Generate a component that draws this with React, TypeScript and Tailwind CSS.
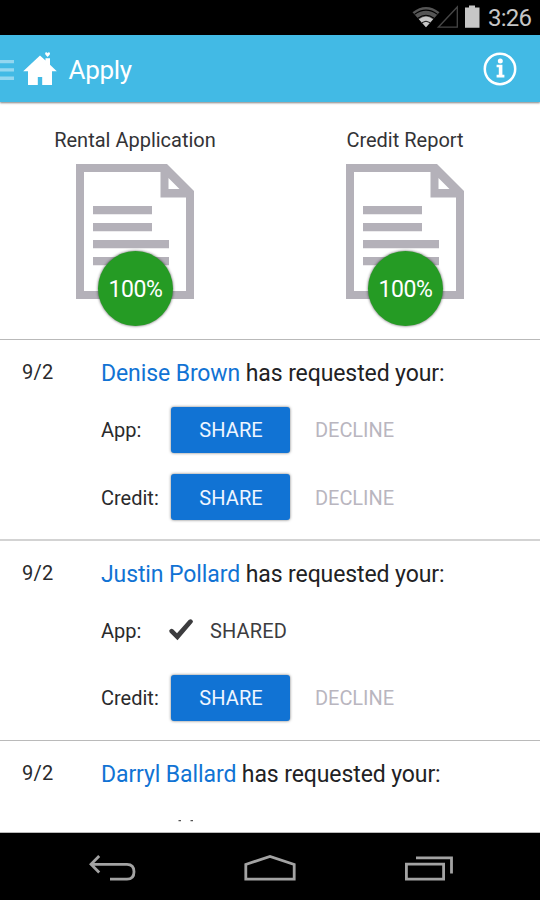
import React from "react";

function StatusBar() {
  return (
    <div className="flex h-[35px] items-center justify-end bg-black pr-[9px] text-[#c6c6c6]">
      <svg width="70" height="35" viewBox="0 0 70 35" className="block">
        <path d="M2.5 12.2Q16 1.6 29.5 12.2L16 27.2Z" fill="#555" />
        <path d="M4.5 14.4Q16 5.8 27.5 14.4M8 18.2Q16 12.2 24 18.2" fill="none" stroke="#000" strokeWidth="1.1" />
        <path d="M8.9 19.3Q16 13.8 23.1 19.3L16 27.2Z" fill="#c6c6c6" />
        <path d="M12 22.6Q16 19.8 20 22.6" fill="none" stroke="#000" strokeWidth="0.9" />
        <path d="M28.3 27.2H47.3V7Z" fill="none" stroke="#464646" strokeWidth="1.3" />
        <path d="M55 7.5H59V5.5H65V7.5H69.5V27.7H55Z" fill="#c6c6c6" />
      </svg>
      <span className="ml-[8px] w-[43px] whitespace-nowrap pt-[2px] text-[24px] leading-[33px] tracking-[-0.8px]">3:26</span>
    </div>
  );
}

function Header() {
  return (
    <header className="relative z-10 flex h-[67px] items-center bg-[#42bae5] text-white shadow-[0_1px_2px_rgba(0,0,0,0.5)]">
      <svg width="60" height="67" viewBox="0 0 60 67" className="block">
        <path d="M0 25H14V28.3H0ZM0 33.2H14V36.5H0ZM0 41.5H14V45H0Z" fill="#93d7f0" />
        <path d="M40 20.5L23.2 36.3H28V50H37.8V42H42.2V50H52V36.3H56.8L50 29.7V23.3H45.5V25.6Z" fill="#fff" />
        <path d="M47.6 22L45.5 19.8Q44.5 17.5 46.2 17.3Q47.2 17.3 47.6 18.3Q48 17.3 49 17.3Q50.7 17.5 49.7 19.8Z" fill="#fff" />
      </svg>
      <h1 className="ml-[8.5px] pt-[3px] text-[26px] font-normal leading-[64px] tracking-[-0.3px]">Apply</h1>
      <svg width="34" height="34" viewBox="0 0 34 34" className="ml-auto mr-[23px] block">
        <circle cx="17" cy="17" r="15.2" fill="none" stroke="#fff" strokeWidth="2.5" />
        <circle cx="17.3" cy="9" r="2.5" fill="#fff" />
        <path d="M13.6 12.7H19.4V22.7H21.4V25.5H13.6V22.7H15.8V15.3H13.6Z" fill="#fff" />
      </svg>
    </header>
  );
}

function Report({ title }: { title: string }) {
  return (
    <div className="flex w-[270px] flex-col items-center">
      <div className="mt-[25px] h-[37px] whitespace-nowrap text-[20px] leading-[26px] text-[#333336]">{title}</div>
      <div className="relative">
        <svg width="118" height="135" viewBox="0 0 118 135" className="block">
          <path fillRule="evenodd" d="M0 0H91L118 27V135H0ZM8 8V127H110V33.5H84.5V8ZM92.5 14V25H103.5Z" fill="#b4b1b9" />
          <path d="M17 42H76V50.2H17ZM17 59H76V67.2H17ZM17 76H93V84.2H17ZM17 93H93V101.2H17Z" fill="#b4b1b9" />
        </svg>
        <div className="absolute left-[21.5px] top-[86.5px] flex h-[75px] w-[75px] items-center justify-center rounded-full bg-[#259b24] text-[23px] tracking-[-0.4px] text-white shadow-[0_0_3px_rgba(0,0,0,0.65)]">
          <span className="pl-[1px] pt-[4px]">100%</span>
        </div>
      </div>
    </div>
  );
}

function Action({ label, shared = false }: { label: string; shared?: boolean }) {
  return (
    <div className="flex h-[46px] items-center text-[20px]">
      <span className="w-[70px] whitespace-nowrap pt-[1px] text-[#2a2a2c]">{label}</span>
      {shared ? (
        <>
          <svg width="24" height="22" viewBox="0 0 24 22" className="-ml-[2px] block">
            <path d="M0.3 11.3Q2 8.5 4.3 10.5L8 14.3L19.7 1Q22.5 -0.8 24 2.2Q23.8 3.5 22.8 4.5L8.5 21.2L1 13.7Q0.2 12.8 0.3 11.3Z" fill="#3c3c3e" />
          </svg>
          <span className="ml-[17px] pt-[1px] tracking-[0.15px] text-[#3c3c3f]">SHARED</span>
        </>
      ) : (
        <>
          <button className="h-[46px] w-[119px] rounded-[3px] bg-[#1173d4] pt-[1px] pl-px tracking-[0.1px] text-[#eef5ff] shadow-[0_0_3px_rgba(0,0,0,0.55)]">SHARE</button>
          <span className="ml-[25px] pt-[1px] tracking-[-0.05px] text-[#b9b6bf]">DECLINE</span>
        </>
      )}
    </div>
  );
}

function Request({ name, children }: { name: string; children?: React.ReactNode }) {
  return (
    <section className="flex">
      <div className="ml-[22px] mt-[20px] w-[79px] text-[20px] leading-[24px] tracking-[0.2px] text-[#2a2a2c]">9/2</div>
      <div className="mt-[20px]">
        <p className="whitespace-nowrap text-[23px] leading-[28px] tracking-[-0.1px]">
          <span className="text-[#1173d4]">{name}</span> has requested your:
        </p>
        {children}
      </div>
    </section>
  );
}

function NavigationBar() {
  return (
    <nav className="h-[67px] bg-black">
      <svg width="540" height="67" viewBox="0 0 540 67" className="block" fill="none" stroke="#a3a3a3" strokeWidth="2.8">
        <path d="M99.2 23L91 31.3L99.2 39.6M91 31.3H127Q134 31.3 134 38.7Q134 46.2 127 46.2H110" />
        <path d="M245.8 46.2V31.5L270 23.4L294.2 31.5V46.2Z" />
        <path d="M406.4 31.1H443.6V46.2H406.4ZM416 24.8H451.5V40.5" />
      </svg>
    </nav>
  );
}

export default function App() {
  return (
    <div className="flex h-[900px] w-[540px] flex-col overflow-hidden bg-white font-['Roboto','Liberation_Sans',sans-serif] text-[#222224]">
      <StatusBar />
      <Header />
      <main className="flex h-[731px] flex-col overflow-hidden">
        <div className="flex h-[237px]">
          <Report title="Rental Application" />
          <Report title="Credit Report" />
        </div>
        <div className="h-[200px] border-t border-[#b9b9b9]">
          <Request name="Denise Brown">
            <div className="mt-[18.5px] flex flex-col gap-[21.5px]">
              <Action label="App:" />
              <Action label="Credit:" />
            </div>
          </Request>
        </div>
        <div className="h-[201px] border-t-2 border-[#d3d3d3]">
          <Request name="Justin Pollard">
            <div className="mt-[18px] flex flex-col gap-[21.5px]">
              <Action label="App:" shared />
              <Action label="Credit:" />
            </div>
          </Request>
        </div>
        <div className="flex h-[93px] flex-col border-b border-t border-[#bababa]">
          <Request name="Darryl Ballard" />
          <svg width="540" height="2" viewBox="0 0 540 2" className="mt-[31px] block">
            <path d="M178.5 0H181V1.2H178.5ZM190.5 0H193V1.2H190.5Z" fill="#555" />
          </svg>
        </div>
      </main>
      <NavigationBar />
    </div>
  );
}
